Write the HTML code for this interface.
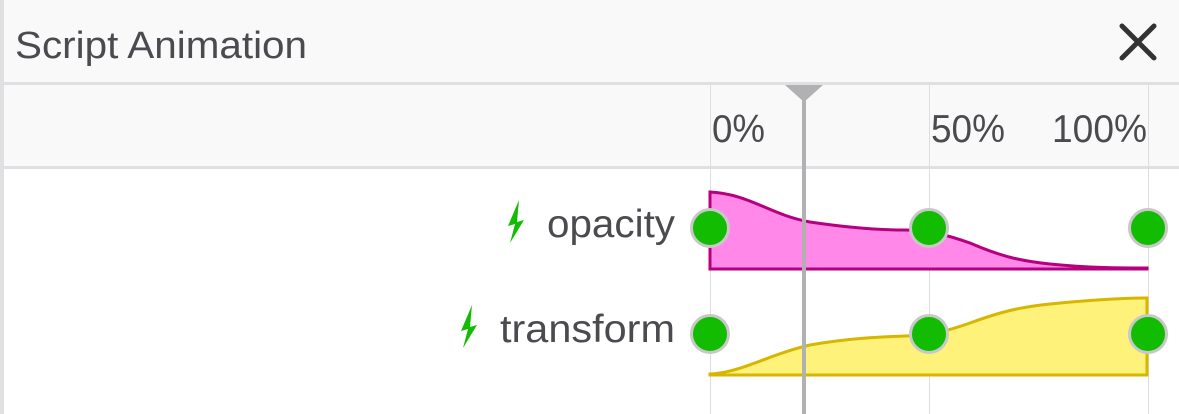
<!DOCTYPE html>
<html><head><meta charset="utf-8"><style>
html,body{margin:0;padding:0;width:1179px;height:414px;overflow:hidden;background:#fff}
svg{display:block}
text{font-family:"Liberation Sans",sans-serif;fill:#4a4a4f}
</style></head><body>
<svg width="1179" height="414" viewBox="0 0 1179 414">
<rect x="0" y="0" width="1179" height="414" fill="#fff"/>
<rect x="0" y="0" width="1179" height="82" fill="#f9f9f9"/>
<rect x="0" y="82" width="1179" height="3" fill="#e0e0e2"/>
<rect x="0" y="85" width="1179" height="81" fill="#f9f9f9"/>
<rect x="0" y="166" width="1179" height="3" fill="#e0e0e2"/>
<rect x="0" y="0" width="4" height="414" fill="#e0e0e2"/>
<text x="15" y="58" font-size="38" textLength="292" lengthAdjust="spacingAndGlyphs">Script Animation</text>
<path d="M1122 26 L1154 58 M1154 26 L1122 58" stroke="#333" stroke-width="5" stroke-linecap="round"/>
<line x1="710.5" y1="85" x2="710.5" y2="414" stroke="#ddd" stroke-width="1"/>
<line x1="929.5" y1="85" x2="929.5" y2="414" stroke="#ddd" stroke-width="1"/>
<line x1="1148.5" y1="85" x2="1148.5" y2="414" stroke="#ddd" stroke-width="1"/>
<text x="712" y="142" font-size="39" textLength="53" lengthAdjust="spacingAndGlyphs">0%</text>
<text x="931" y="142" font-size="39" textLength="74" lengthAdjust="spacingAndGlyphs">50%</text>
<text x="1052" y="142" font-size="39" textLength="95" lengthAdjust="spacingAndGlyphs">100%</text>
<text x="547" y="237" font-size="39" textLength="128" lengthAdjust="spacingAndGlyphs">opacity</text>
<text x="500" y="342" font-size="39" textLength="175" lengthAdjust="spacingAndGlyphs">transform</text>
<polygon points="519,200 508,226 515,224 510,243 524,220 517,222" fill="#12bc00"/>
<polygon points="472,305 461,331 468,329 463,348 477,325 470,327" fill="#12bc00"/>
<path d="M710 269 L710 192 C750 194 770 215 810 222 C850 228 880 230 905 230 C930 230 950 236 970 243 C1000 256 1020 261 1050 264 C1090 268 1120 268 1147 268 L1147 269 Z" fill="#ff88e9" stroke="#b5007f" stroke-width="3"/>
<path d="M710 375 L710 374 C740 373 770 354 810 345 C850 338 880 337 905 336 C930 336 950 330 970 323 C1000 312 1020 307 1050 304 C1090 300 1120 298 1147 298 L1147 375 Z" fill="#fff27a" stroke="#d7b600" stroke-width="3"/>
<rect x="802" y="85" width="4" height="329" fill="#b1b1b3"/>
<polygon points="785,85 823,85 804,102" fill="#b1b1b3"/>
<g fill="#12bc00" stroke="#c8c8c8" stroke-width="3">
<circle cx="710" cy="228" r="18.5"/><circle cx="929" cy="228" r="18.5"/><circle cx="1148" cy="228" r="18.5"/>
<circle cx="710" cy="334" r="18.5"/><circle cx="929" cy="334" r="18.5"/><circle cx="1148" cy="334" r="18.5"/>
</g>
</svg>
</body></html>
